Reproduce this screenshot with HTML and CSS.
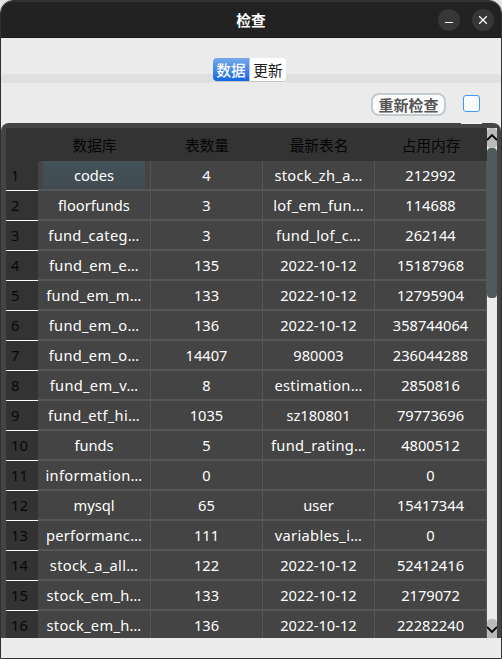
FILE: index.html
```html
<!DOCTYPE html>
<html lang="zh-CN">
<head>
<meta charset="utf-8">
<title>检查</title>
<link rel="stylesheet" href="styles.css">
</head>
<body>
<div class="window">
  <header class="titlebar">
    <h1>检查</h1>
    <div class="controls">
      <button class="control" aria-label="最小化"><svg width="22" height="22" viewBox="0 0 22 22"><path d="M7 13.5h8" stroke="#fff" fill="none"/></svg></button>
      <button class="control" aria-label="关闭"><svg width="22" height="22" viewBox="0 0 22 22"><path d="M7.2 7.2l7.6 7.6M14.8 7.2l-7.6 7.6" stroke="#fff" stroke-width="1.3" fill="none"/></svg></button>
    </div>
  </header>
  <nav class="tabs">
    <span class="band left"></span>
    <div class="tab-group"><button class="tab active">数据</button><button class="tab">更新</button></div>
    <span class="band right"></span>
  </nav>
  <div class="toolbar">
    <button class="recheck">重新检查</button>
    <span class="checkbox"></span>
  </div>
  <main class="frame">
    <span class="notch"></span>
    <div class="grid">
      <div class="row head"><b></b><span>数据库</span><span>表数量</span><span>最新表名</span><span>占用内存</span></div>
      <div class="row"><b>1</b><span class="selected">codes</span><span>4</span><span class="name">stock_zh_a…</span><span>212992</span></div>
      <div class="row"><b>2</b><span>floorfunds</span><span>3</span><span class="name">lof_em_fun…</span><span>114688</span></div>
      <div class="row"><b>3</b><span class="name">fund_categ…</span><span>3</span><span class="name">fund_lof_c…</span><span>262144</span></div>
      <div class="row"><b>4</b><span class="name">fund_em_e…</span><span>135</span><span>2022-10-12</span><span>15187968</span></div>
      <div class="row"><b>5</b><span class="name">fund_em_m…</span><span>133</span><span>2022-10-12</span><span>12795904</span></div>
      <div class="row"><b>6</b><span class="name">fund_em_o…</span><span>136</span><span>2022-10-12</span><span>358744064</span></div>
      <div class="row"><b>7</b><span class="name">fund_em_o…</span><span>14407</span><span>980003</span><span>236044288</span></div>
      <div class="row"><b>8</b><span class="name">fund_em_v…</span><span>8</span><span class="name">estimation…</span><span>2850816</span></div>
      <div class="row"><b>9</b><span class="name">fund_etf_hi…</span><span>1035</span><span>sz180801</span><span>79773696</span></div>
      <div class="row"><b>10</b><span>funds</span><span>5</span><span class="name">fund_rating…</span><span>4800512</span></div>
      <div class="row"><b>11</b><span class="name">information…</span><span>0</span><span></span><span>0</span></div>
      <div class="row"><b>12</b><span>mysql</span><span>65</span><span>user</span><span>15417344</span></div>
      <div class="row"><b>13</b><span class="name">performanc…</span><span>111</span><span class="name">variables_i…</span><span>0</span></div>
      <div class="row"><b>14</b><span class="name">stock_a_all…</span><span>122</span><span>2022-10-12</span><span>52412416</span></div>
      <div class="row"><b>15</b><span class="name">stock_em_h…</span><span>133</span><span>2022-10-12</span><span>2179072</span></div>
      <div class="row"><b>16</b><span class="name">stock_em_h…</span><span>136</span><span>2022-10-12</span><span>22282240</span></div>
    </div>
    <div class="scrollbar">
      <div class="arrow"><svg width="10" height="20" viewBox="0 0 10 20"><path d="M0 12l5-5 5 5" stroke="#000" stroke-width="1.8" fill="none"/></svg></div>
      <div class="thumb"></div>
      <div class="arrow down"><svg width="10" height="19" viewBox="0 0 10 19"><path d="M0 8l5 5 5-5" stroke="#000" stroke-width="1.8" fill="none"/></svg></div>
    </div>
  </main>
</div>
</body>
</html>
```
FILE: styles.css
```css
* { box-sizing: border-box; }
body {
  margin: 0;
  background: #e4e4e4;
  font: 14.67px/20px "Noto Sans", "Noto Sans CJK SC", sans-serif;
}
button { padding: 0; border: 0; font: inherit; }
.window {
  display: flex;
  flex-direction: column;
  width: 502px;
  height: 659px;
  border: 1px solid #303030;
  border-radius: 13px 13px 0 0;
  background: #ebebeb;
  overflow: hidden;
}
.titlebar {
  display: grid;
  grid-template-columns: 1fr auto 1fr;
  align-items: center;
  height: 37px;
  flex: none;
  background: #222;
  border-top: 1px solid #333;
  border-bottom: 1px solid #181818;
}
.titlebar h1 {
  grid-column: 2;
  margin: 1px 0 0;
  color: #fff;
  font: bold 14.67px/20px "Noto Sans CJK SC", sans-serif;
}
.controls { display: flex; justify-content: flex-end; gap: 12px; padding-right: 7px; }
.control { width: 22px; height: 22px; border-radius: 50%; background: #373737; }
.control svg { display: block; }
.tabs { display: flex; height: 46px; padding-top: 20px; flex: none; }
.band { flex: 1; height: 9px; margin-top: 16px; background: #e0e0e0; }
.left { flex: 0 0 212px; border-top-left-radius: 4px; }
.right { border-top-right-radius: 4px; }
.tab-group {
  display: flex;
  width: 73px;
  height: 23px;
  border-radius: 4px;
  background: #fff;
  box-shadow: 0 1px #c4c4c4;
  overflow: hidden;
}
.tab { width: 36px; background: #fff; color: #1c1c1c; line-height: 24px; font-family: "Noto Sans CJK SC", sans-serif; }
.active { width: 37px; border-right: 1px solid #b5c8e5; background: linear-gradient(#76a9ea, #1467e3); color: #fff; font-weight: 500; }
.toolbar {
  display: flex;
  justify-content: flex-end;
  align-items: flex-start;
  gap: 17px;
  height: 39px;
  padding: 9px 21px 0 0;
  flex: none;
}
.recheck {
  width: 75px;
  height: 23px;
  border: 2px solid #c3cad0;
  border-radius: 8px;
  background: #fcfcfc;
  color: #555;
  font: bold 15px/20px "Noto Sans CJK SC", sans-serif;
}
.checkbox { width: 17px; height: 17px; margin-top: 2px; border: 1px solid #3d9bf5; border-radius: 3px; background: #fafcfb; }
.frame {
  position: relative;
  display: flex;
  width: 500px;
  height: 515px;
  padding: 5px 4px 0 5px;
  border-radius: 8px 8px 0 0;
  background: #444;
  overflow: hidden;
}
.notch { position: absolute; top: 0; left: 460px; width: 21px; height: 1px; background: #f2f2f2; }
.grid { width: 481px; height: 510px; overflow: hidden; }
.row { display: grid; grid-template-columns: 32px 113px 112px 112px 112px; height: 30px; color: #fff; }
.row > * { overflow: hidden; white-space: nowrap; }
.row b { padding: 4px 0 0 5px; border-bottom: 1px solid #fff; background: #333; color: #080808; font-weight: 400; }
.row span { padding-top: 4px; border-right: 1px solid #565656; border-bottom: 2px solid #565656; text-align: center; }
.row .name { letter-spacing: 0.3px; }
.row .selected { background: linear-gradient(#43525b, #424b51) 5px 0 / 102px 28px no-repeat; }
.row.head { height: 33px; background: #333; color: #050505; }
.head b { border: 0; }
.row.head span { padding-top: 7px; border: 0; font-family: "Noto Sans CJK SC", sans-serif; }
.scrollbar { display: flex; flex-direction: column; width: 10px; height: 510px; background: #ebebeb; }
.arrow { height: 20px; border-radius: 4px; background: #bababa; }
.arrow svg { display: block; }
.thumb { height: 150px; border-radius: 4px; background: #505a5d; }
.down { height: 19px; margin-top: auto; border-radius: 4px 4px 0 0; }
```
